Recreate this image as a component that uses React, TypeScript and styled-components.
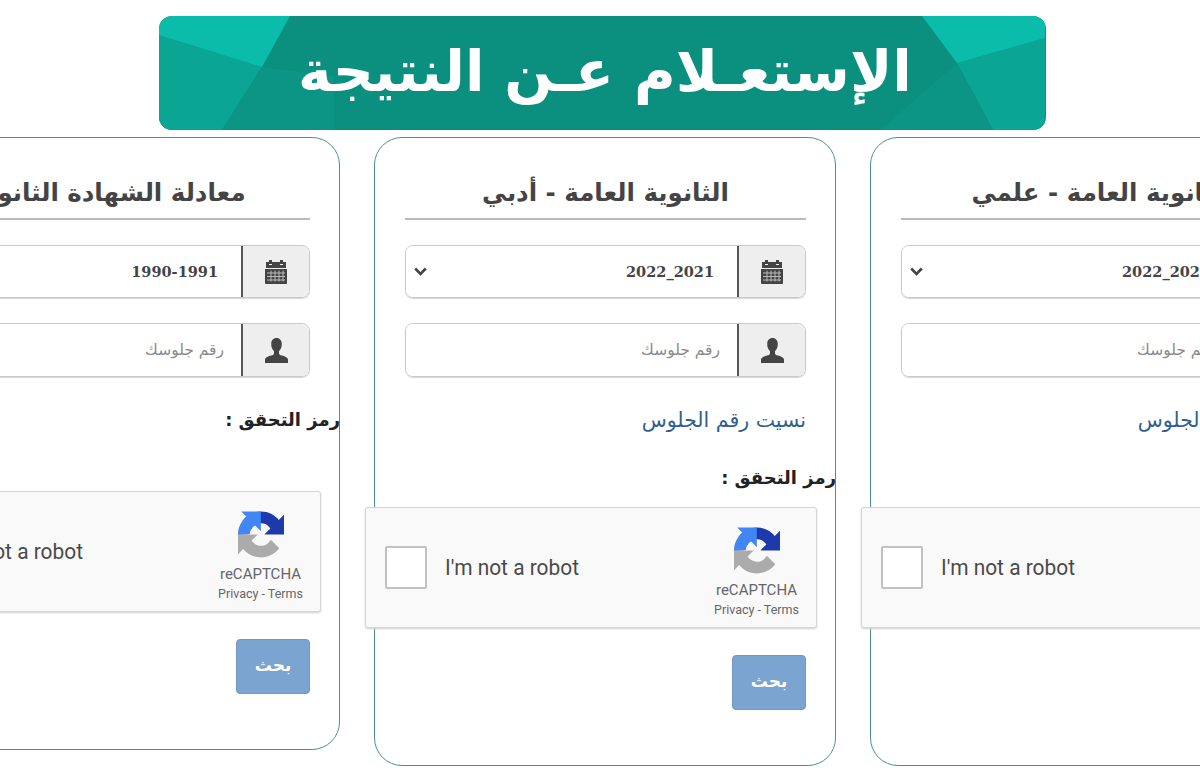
import React from 'react'
import styled, { createGlobalStyle } from 'styled-components'

const GlobalStyle = createGlobalStyle`
  * {
    box-sizing: border-box;
  }

  html,
  body {
    margin: 0;
    height: 768px;
    overflow: hidden;
    background: #fff;
    font-family: 'DejaVu Sans', sans-serif;
  }
`

const Page = styled.div`
  width: 1200px;
  height: 768px;
  overflow: hidden;
  padding-top: 16px;
`

const Banner = styled.header`
  position: relative;
  width: 887px;
  height: 114px;
  margin: 0 0 7px 159px;
  border-radius: 13px;
  overflow: hidden;
  background: #0b8f7f;
  display: flex;
  align-items: center;
  justify-content: center;
`

const BannerArt = styled.svg`
  position: absolute;
  inset: 0;
  width: 100%;
  height: 100%;
`

const BannerTitle = styled.h1`
  position: relative;
  margin: 0 0 4px 5px;
  color: #fff;
  font-size: 57px;
  font-weight: 700;
  line-height: 1;
  white-space: nowrap;
  direction: rtl;
`

const CardRow = styled.main`
  display: flex;
  justify-content: center;
  align-items: flex-start;
  gap: 34px;
  width: 1200px;
  padding-left: 10px;
`

const Card = styled.section`
  flex: 0 0 462px;
  min-width: 0;
  display: flex;
  flex-direction: column;
  align-items: flex-end;
  padding: 30px 29px 0 30px;
  border: 1.5px solid #4a918c;
  border-radius: 28px;
  background: #fff;
  height: ${(p) => p.$height}px;
`

const CardTitle = styled.h2`
  width: 100%;
  height: 52px;
  margin: 0 0 25px;
  border-bottom: 2px solid #b9b9b9;
  color: #444;
  font-size: 24.5px;
  line-height: 50px;
  font-weight: 700;
  text-align: center;
  white-space: nowrap;
  direction: rtl;
`

const Group = styled.div`
  flex: 0 0 ${(p) => p.$height}px;
  display: flex;
  width: 100%;
  margin-bottom: 25px;
  border: 1px solid #c9c9c9;
  border-radius: 8px;
  overflow: hidden;
  box-shadow: 0 1px 1px #d8d8d8;
`

const Addon = styled.div`
  flex: 0 0 68px;
  display: flex;
  align-items: center;
  justify-content: center;
  background: #eee;
  border-left: 2px solid #555;
  color: #444;
`

const Field = styled.div`
  flex: 1;
  display: flex;
  align-items: center;
  justify-content: space-between;
  padding: 0 ${(p) => p.$right}px 0 8px;
  background: #fff;
`

const YearValue = styled.span`
  color: #444;
  font-family: 'DejaVu Serif', serif;
  font-size: 14.5px;
  font-weight: 700;
  margin-left: auto;
`

const Placeholder = styled.span`
  color: #8a8a8a;
  font-size: 15.5px;
  margin-left: auto;
  direction: rtl;
`

const ForgotLink = styled.a`
  display: block;
  height: 36px;
  line-height: 36px;
  color: #2f5f8f;
  font-size: 20.5px;
  text-decoration: none;
  white-space: nowrap;
  direction: rtl;
`

const CodeLabel = styled.div`
  margin: ${(p) => p.$top}px -30px 0 0;
  height: 30px;
  line-height: 30px;
  color: #222;
  font-size: 18px;
  font-weight: 700;
  white-space: nowrap;
  direction: rtl;
`

const Captcha = styled.div`
  flex: 0 0 121px;
  width: 452px;
  margin: ${(p) => p.$top}px -11px 0 0;
  padding: 0 17px 0 19px;
  display: flex;
  align-items: center;
  justify-content: space-between;
  position: relative;
  background: #f9f9f9;
  border: 1px solid #d6d6d6;
  border-radius: 3px;
  box-shadow: 0 1px 2px #cfcfcf;
`

const CaptchaLeft = styled.div`
  display: flex;
  align-items: center;
  gap: 18px;
`

const CheckBox = styled.div`
  width: 42px;
  height: 43px;
  background: #fff;
  border: 2px solid #c1c1c1;
  border-radius: 2px;
`

const CaptchaText = styled.span`
  color: #4a4a4a;
  font-family: Roboto, 'Liberation Sans', sans-serif;
  font-size: 22px;
  transform: scaleX(0.95);
  transform-origin: left center;
  white-space: nowrap;
`

const CaptchaBrand = styled.div`
  width: 85px;
  align-self: flex-start;
  margin-top: 19px;
  display: flex;
  flex-direction: column;
  align-items: center;
  font-family: Roboto, 'Liberation Sans', sans-serif;
  color: #666;
`

const BrandName = styled.span`
  margin-top: 8px;
  font-size: 15px;
  line-height: 17px;
`

const BrandLinks = styled.span`
  margin-top: 4px;
  font-size: 12.5px;
  line-height: 14px;
  white-space: nowrap;
`

const SearchButton = styled.button`
  flex: 0 0 55px;
  width: 74px;
  margin: 27px 0 0;
  padding: 0 0 4px;
  border: 1px solid #7299c4;
  border-radius: 4px;
  background: #7ba4d0;
  color: #fff;
  font-family: 'DejaVu Sans', sans-serif;
  font-size: 17px;
  font-weight: 700;
`

const CalendarIcon = () => (
  <svg width="22" height="24" viewBox="0 0 22 24" fill="currentColor">
    <rect x="4" y="0" width="3" height="4" />
    <rect x="15" y="0" width="3" height="4" />
    <path d="M1 2h3v3h3V2h8v3h3V2h3v6H1z" />
    <path d="M0 9h22v14a1 1 0 0 1-1 1H1a1 1 0 0 1-1-1z" />
    <g stroke="#bbb" strokeWidth="1">
      <path d="M2 13h18M2 16.5h18M2 20h18M6 10.5v11M10 10.5v11M14 10.5v11M18 10.5v11" />
    </g>
  </svg>
)

const UserIcon = () => (
  <svg width="23" height="25" viewBox="0 0 23 25" fill="currentColor">
    <path d="M11.5 0c3.3 0 5.3 2.5 5.3 6 0 3-1.1 5.7-2.8 7.2v2.2c0 .9 1 1.5 3 2.2 3.4 1.1 6 2.1 6 3.9V25H0v-3.5c0-1.8 2.6-2.8 6-3.9 2-.7 3-1.3 3-2.2v-2.2C7.3 11.7 6.2 9 6.2 6c0-3.5 2-6 5.3-6z" />
  </svg>
)

const Chevron = () => (
  <svg width="13" height="9" viewBox="0 0 13 9" fill="none" stroke="#444" strokeWidth="2.6">
    <path d="M1.2 1.5l5.3 5.3 5.300-5.300" />
  </svg>
)

const RecaptchaLogo = () => (
  <svg width="46" height="47" viewBox="0 0 64 64">
    <path
      d="M64 31.955l-.033-1.37V4.687l-7.16 7.16C50.948 4.674 42.033.093 32.05.093c-10.4 0-19.622 4.96-25.458 12.64l11.736 11.86a15.55 15.55 0 0 1 4.754-5.334c2.05-1.6 4.952-2.906 8.968-2.906.485 0 .86.057 1.135.163 4.976.393 9.288 3.14 11.828 7.124l-8.307 8.307c10.522-.04 22.4-.066 27.295.004"
      fill="#1c3aa9"
    />
    <path
      d="M31.862.094l-1.37.033H4.594l7.16 7.16C4.58 13.147 0 22.06 0 32.046c0 .2 0 .4.01.6l13.9-.6 2.5-1.2c.393-4.976 3.14-9.288 7.124-11.828l8.307 8.307c-.04-10.522-.066-22.4.004-27.295"
      fill="#4285f4"
    />
    <path
      d="M.001 32.045l.033 1.37v25.898l7.16-7.16c5.86 7.173 14.774 11.754 24.76 11.754 10.4 0 19.622-4.96 25.458-12.64l-11.736-11.86a15.55 15.55 0 0 1-4.754 5.334c-2.05 1.6-4.952 2.906-8.968 2.906-.485 0-.86-.057-1.135-.163-4.976-.393-9.288-3.14-11.828-7.124l8.307-8.307c-10.522.04-22.4.066-27.295-.004"
      fill="#ababab"
    />
  </svg>
)

const cards = [
  {
    title: 'معادلة الشهادة الثانوية',
    year: '1990-1991',
    hasSelect: false,
    forgot: false,
  },
  {
    title: 'الثانوية العامة - أدبي',
    year: '2022_2021',
    hasSelect: true,
    forgot: true,
  },
  {
    title: 'الثانوية العامة - علمي',
    year: '2022_2021',
    hasSelect: true,
    forgot: true,
  },
]

const App = () => (
  <Page>
    <GlobalStyle />
    <Banner>
      <BannerArt viewBox="0 0 887 114" preserveAspectRatio="none">
        <polygon points="0,19 103,51 63,114 0,114" fill="#0aa593" />
        <polygon points="0,0 131,0 103,51 0,19" fill="#0bbcab" />
        <polygon points="63,114 103,51 175,60 175,114" fill="#0c9484" />
        <polygon points="798,47 886,22 886,114 834,114" fill="#0aa593" />
        <polygon points="763,0 886,0 886,22 798,47" fill="#0bbcab" />
        <polygon points="721,114 798,47 834,114" fill="#0c9484" />
      </BannerArt>
      <BannerTitle>الإستعـلام عـن النتيجة</BannerTitle>
    </Banner>
    <CardRow>
      {cards.map((card) => (
        <Card key={card.title} $height={card.forgot ? 629 : 613}>
          <CardTitle>{card.title}</CardTitle>
          <Group $height={53}>
            <Field $right={23}>
              {card.hasSelect && <Chevron />}
              <YearValue>{card.year}</YearValue>
            </Field>
            <Addon>
              <CalendarIcon />
            </Addon>
          </Group>
          <Group $height={54}>
            <Field $right={17}>
              <Placeholder>رقم جلوسك</Placeholder>
            </Field>
            <Addon>
              <UserIcon />
            </Addon>
          </Group>
          {card.forgot && <ForgotLink href="#">نسيت رقم الجلوس</ForgotLink>}
          <CodeLabel $top={card.forgot ? 25 : 3}>رمز التحقق :</CodeLabel>
          <Captcha $top={card.forgot ? 14 : 56}>
            <CaptchaLeft>
              <CheckBox />
              <CaptchaText>I'm not a robot</CaptchaText>
            </CaptchaLeft>
            <CaptchaBrand>
              <RecaptchaLogo />
              <BrandName>reCAPTCHA</BrandName>
              <BrandLinks>Privacy - Terms</BrandLinks>
            </CaptchaBrand>
          </Captcha>
          <SearchButton type="button">بحث</SearchButton>
        </Card>
      ))}
    </CardRow>
  </Page>
)

export default App
